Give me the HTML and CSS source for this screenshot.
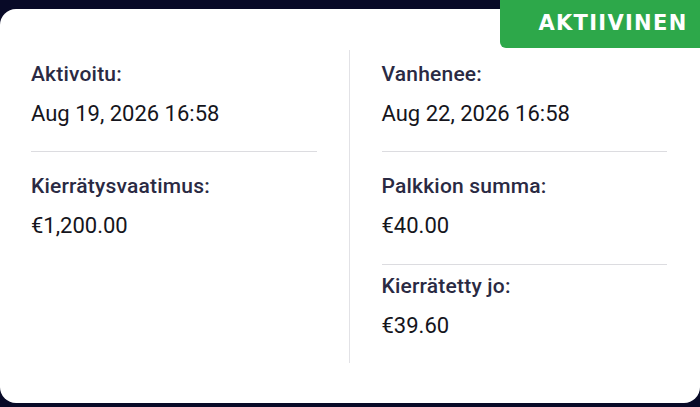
FILE: index.html
```html
<!DOCTYPE html>
<html lang="fi">
<head>
<meta charset="utf-8">
<link rel="stylesheet" href="styles.css">
</head>
<body>
<div class="page">
  <div class="card">
    <div class="col">
      <div class="item">
        <div class="label">Aktivoitu:</div>
        <div class="value">Aug 19, 2026 16:58</div>
      </div>
      <div class="rule"></div>
      <div class="item item-second">
        <div class="label">Kierrätysvaatimus:</div>
        <div class="value">€1,200.00</div>
      </div>
    </div>
    <div class="divider"></div>
    <div class="col">
      <div class="item">
        <div class="label">Vanhenee:</div>
        <div class="value">Aug 22, 2026 16:58</div>
      </div>
      <div class="rule"></div>
      <div class="item item-second">
        <div class="label">Palkkion summa:</div>
        <div class="value">€40.00</div>
      </div>
      <div class="rule rule-second"></div>
      <div class="item item-third">
        <div class="label">Kierrätetty jo:</div>
        <div class="value">€39.60</div>
      </div>
    </div>
  </div>
  <div class="badge">AKTIIVINEN</div>
</div>
</body>
</html>
```
FILE: styles.css
```css
html, body {
  margin: 0;
  padding: 0;
  background: #080a27;
  width: 700px;
  height: 407px;
  overflow: hidden;
  font-family: Roboto, "Noto Sans", sans-serif;
}
.page {
  position: relative;
  padding-top: 9px;
  height: 398px;
}
.card {
  background: #ffffff;
  border-radius: 16px;
  height: 394px;
  box-sizing: border-box;
  padding: 41px 33px 40px 31px;
  display: grid;
  grid-template-columns: 1fr 1px 1fr;
  column-gap: 32px;
}
.divider {
  background: #e2e2e6;
}
.col {
  display: flex;
  flex-direction: column;
}
.item {
  padding-top: 12px;
}
.item-second {
  padding-top: 22px;
}
.item-third {
  padding-top: 9px;
}
.label {
  font-size: 21px;
  line-height: 24px;
  font-weight: 500;
  color: #2a2a43;
  letter-spacing: 0.2px;
}
.value {
  font-size: 22px;
  line-height: 28px;
  margin-top: 14px;
  color: #15151c;
}
.rule {
  height: 1px;
  background: #dcdce0;
  margin-top: 23px;
}
.rule-second {
  margin-top: 24px;
}
.badge {
  position: absolute;
  top: 0;
  right: 0;
  width: 200px;
  height: 48px;
  background: #2da84a;
  border-bottom-left-radius: 6px;
  color: #ffffff;
  font-family: "DejaVu Sans", sans-serif;
  font-weight: 700;
  font-size: 21px;
  letter-spacing: 1.3px;
  display: flex;
  align-items: center;
  justify-content: center;
  padding-left: 26px;
  box-sizing: border-box;
  padding-bottom: 2px;
}
```
